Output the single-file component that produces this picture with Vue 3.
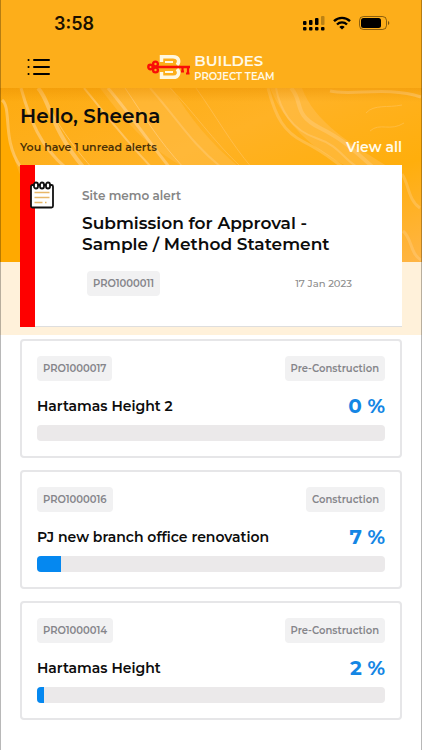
<script setup>
import { ref, computed } from 'vue'

const user = ref('Sheena')

const alerts = ref([
  {
    type: 'Site memo alert',
    title: 'Submission for Approval - Sample / Method Statement',
    code: 'PRO1000011',
    date: '17 Jan 2023'
  }
])

const projects = ref([
  { code: 'PRO1000017', name: 'Hartamas Height 2', stage: 'Pre-Construction', progress: 0 },
  { code: 'PRO1000016', name: 'PJ new branch office renovation', stage: 'Construction', progress: 7 },
  { code: 'PRO1000014', name: 'Hartamas Height', stage: 'Pre-Construction', progress: 2 }
])

const unread = computed(() => alerts.value.length)
</script>

<template>
  <div class="app">
    <header class="header">
      <!-- Status bar -->
      <div class="status-bar">
        <span class="time">3:58</span>
        <div class="status-icons">
          <svg width="22" height="15" viewBox="0 0 22 15">
            <rect x="0" y="5" width="3.500" height="4" rx="1" />
            <rect x="6" y="4" width="3.500" height="5" rx="1" />
            <rect x="12" y="2" width="3.500" height="7" rx="1" />
            <rect x="18" y="0" width="3.500" height="9" rx="1" opacity="0.25" />
            <rect x="0" y="11" width="3.500" height="3.500" rx="1" />
            <rect x="6" y="11" width="3.500" height="3.500" rx="1" />
            <rect x="12" y="11" width="3.500" height="3.500" rx="1" />
            <rect x="18" y="11" width="3.500" height="3.500" rx="1" />
          </svg>
          <svg width="18" height="14" viewBox="0 0 18 14" fill="none" stroke="#000" stroke-width="2.4">
            <path d="M1 5.2C5.5 0.7 12.5 0.7 17 5.2" />
            <path d="M4 8.5C6.8 5.7 11.2 5.7 14 8.5" />
            <path d="M9 13.6L6.3 10.9C7.8 9.5 10.2 9.5 11.7 10.9Z" fill="#000" stroke="none" />
          </svg>
          <svg width="31" height="14" viewBox="0 0 31 14">
            <rect x="0.5" y="0.5" width="27" height="13" rx="4" fill="none" stroke="#000" opacity="0.45" />
            <rect x="2" y="2" width="20" height="10" rx="2.5" />
            <path d="M29 5C30.8 5.6 30.8 8.4 29 9Z" opacity="0.5" />
          </svg>
        </div>
      </div>

      <!-- Navigation bar -->
      <nav class="nav">
        <button class="menu-btn" type="button" aria-label="Menu">
          <svg width="24" height="18" viewBox="0 0 24 18" stroke="#000" stroke-width="2" stroke-linecap="round">
            <path d="M7 2H22M7 9H22M7 16H22" />
            <path d="M1.5 2H1.6M1.5 9H1.6M1.5 16H1.6" />
          </svg>
        </button>
        <div class="brand">
          <svg width="44" height="26" viewBox="0 0 44 26" fill="none">
            <g stroke="#fff7df" stroke-width="3.500">
              <path d="M14.500 8V2.700H26C32 2.700 33 8 30 11" />
              <path d="M30 15C33 18 32 23.300 26 23.300H14.500V18" />
              <path d="M18 8H26M18 18H26" stroke-width="2.200" />
            </g>
            <path d="M9 13H43" stroke="#f80f08" stroke-width="2.600" />
            <path d="M35.500 13V18.500M41 12V20.500M34 17.500H37M39 19.500H42.500" stroke="#f80f08" stroke-width="2.200" />
            <circle cx="3.500" cy="13" r="2.200" stroke="#f80f08" stroke-width="2.400" />
            <circle cx="8.500" cy="10" r="2.400" stroke="#f80f08" stroke-width="2.400" />
            <circle cx="8.500" cy="16" r="2.400" stroke="#f80f08" stroke-width="2.400" />
            <circle cx="7" cy="13" r="1.800" fill="#f80f08" />
          </svg>
          <div class="brand-text">
            <span class="brand-name">BUILDES</span>
            <span class="brand-team">PROJECT TEAM</span>
          </div>
        </div>
      </nav>
    </header>

    <main>
      <!-- Greeting and alerts -->
      <section class="hero">
        <svg class="hero-art" viewBox="0 0 422 174" preserveAspectRatio="none" fill="none" stroke="#ffd9a0">
          <defs>
            <linearGradient id="paint" x1="0" y1="0" x2="1" y2="1">
              <stop offset="0" stop-color="#fdab10" />
              <stop offset="0.4" stop-color="#ffb225" />
              <stop offset="0.7" stop-color="#ffae0c" />
              <stop offset="1" stop-color="#ffb545" />
            </linearGradient>
            <linearGradient id="shade" x1="0" y1="0" x2="0" y2="1">
              <stop offset="0" stop-color="#e88f00" stop-opacity="0.45" />
              <stop offset="1" stop-color="#e88f00" stop-opacity="0" />
            </linearGradient>
          </defs>
          <rect width="422" height="174" fill="url(#paint)" stroke="none" />
          <path d="M0 8C14 30 6 60 22 90V174H0Z" fill="#ffa900" stroke="none" />
          <path d="M100 0C130 40 150 60 185 80H240C210 55 190 30 172 0Z" fill="#ffbd4c" opacity="0.5" stroke="none" />
          <path d="M270 0C285 35 310 60 350 80H390C350 55 315 35 302 0Z" fill="#ffc15c" opacity="0.45" stroke="none" />
          <g opacity="0.5">
            <path d="M2 12C12 20 2 52 20 78" stroke-width="3" />
            <path d="M21 0C30 32 40 58 66 80" stroke-width="3" />
            <path d="M38 0C50 12 50 40 84 80" stroke-width="4" />
            <path d="M45 10C54 30 66 50 92 80" />
            <path d="M84 0C104 24 120 46 152 80" stroke-width="2" />
            <path d="M108 0C130 26 146 50 170 80" stroke-width="3" />
            <path d="M125 0C144 28 158 52 184 80" />
          </g>
          <g opacity="0.3">
            <path d="M150 0C180 34 190 54 222 80" stroke-width="2" />
            <path d="M170 0C194 24 212 52 242 80" />
            <path d="M196 0C216 28 230 54 252 80" />
            <path d="M268 0C276 30 284 44 304 54S330 70 344 80" stroke-width="3" />
            <path d="M276 0C280 22 292 42 316 50S342 70 356 78" stroke-width="2" />
            <path d="M291 0C304 14 292 26 320 40S356 65 374 80" stroke-width="4" />
            <path d="M366 25C374 16 388 20 402 17M370 43C380 34 390 44 404 35" />
            <path d="M402 86C409 96 408 112 420 120M403 143C412 150 410 166 421 172" stroke-width="3" />
          </g>
          <path d="M330 3C350 8 388 -2 421 9" stroke-width="3" opacity="0.5" />
          <rect width="422" height="14" fill="url(#shade)" stroke="none" />
        </svg>

        <div class="hero-content">
          <h1>Hello, {{ user }}</h1>
          <div class="alert-summary">
            <p>You have {{ unread }} unread alerts</p>
            <a href="#alerts">View all</a>
          </div>

          <article v-for="alert in alerts" :key="alert.code" class="alert-card">
            <svg class="memo-icon" width="24" height="28" viewBox="0 0 24 28" fill="none">
              <rect x="1" y="4" width="22" height="22.500" rx="1.500" fill="#fff" stroke="#111" stroke-width="1.800" />
              <g fill="#fff" stroke="#111" stroke-width="1.800">
                <rect x="4" y="1.500" width="4" height="6" rx="2" />
                <rect x="10" y="1.500" width="4" height="6" rx="2" />
                <rect x="16" y="1.500" width="4" height="6" rx="2" />
              </g>
              <path d="M4.500 11.500H19.500M4.500 16.500H19.500M4.500 21.500H12.500M15 21.500H16.500" stroke="#e8b768" stroke-width="1.600" />
            </svg>
            <p class="alert-type">{{ alert.type }}</p>
            <h2>{{ alert.title }}</h2>
            <div class="alert-meta">
              <span class="chip">{{ alert.code }}</span>
              <time>{{ alert.date }}</time>
            </div>
          </article>
        </div>
      </section>

      <!-- Projects -->
      <section class="projects">
        <article v-for="project in projects" :key="project.code" class="project-card">
          <div class="row">
            <span class="chip">{{ project.code }}</span>
            <span class="chip">{{ project.stage }}</span>
          </div>
          <div class="row project-info">
            <h3>{{ project.name }}</h3>
            <span class="percent">{{ project.progress }} %</span>
          </div>
          <div
            class="bar"
            role="progressbar"
            aria-valuemin="0"
            aria-valuemax="100"
            :aria-valuenow="project.progress"
            :aria-label="project.name"
          >
            <div class="bar-fill" :style="{ width: project.progress + '%' }"></div>
          </div>
        </article>
      </section>
    </main>
  </div>
</template>

<style>
body {
  margin: 0;
  background: #fff;
}
</style>

<style scoped>
.app {
  position: relative;
  min-height: 100vh;
  background: #fff;
  color: #0c0c0c;
  font-family: Montserrat, Inter, "Liberation Sans", sans-serif;
}

/* thin edge on both sides of the screen */
.app::after {
  content: '';
  position: absolute;
  inset: 0;
  border: solid rgba(0, 0, 0, 0.28);
  border-width: 0 1px;
  pointer-events: none;
}

h1,
h2,
h3,
p {
  margin: 0;
}

.header {
  background: #fdae1a;
}

.status-bar {
  display: flex;
  justify-content: space-between;
  align-items: center;
  height: 46px;
  padding: 0 32px 0 54px;
}

.time {
  font-family: Inter, "Liberation Sans", sans-serif;
  font-size: 18px;
  font-weight: 600;
  color: #1a1000;
}

.status-icons {
  display: flex;
  align-items: center;
  gap: 8px;
}

.nav {
  display: grid;
  grid-template-columns: 1fr auto 1fr;
  align-items: center;
  height: 42px;
  padding: 0 25px;
}

.menu-btn {
  display: flex;
  justify-self: start;
  padding: 2px;
  border: none;
  background: none;
  cursor: pointer;
}

.brand {
  display: flex;
  align-items: center;
  gap: 3px;
  color: #fff9e6;
}

.brand-text {
  display: flex;
  flex-direction: column;
  font-weight: 600;
}

.brand-name {
  font-size: 15px;
  line-height: 18px;
}

.brand-team {
  font-size: 10px;
  line-height: 13px;
}

.hero {
  position: relative;
  padding: 14px 20px 8px;
  background: #fff1da;
}

.hero-art {
  position: absolute;
  top: 0;
  left: 0;
  width: 100%;
  height: 174px;
}

.hero-content {
  position: relative;
}

h1 {
  font-size: 20px;
  line-height: 28px;
  font-weight: 600;
}

.alert-summary {
  display: flex;
  justify-content: space-between;
  align-items: center;
  margin: 7px 0 8px;
  line-height: 20px;
}

.alert-summary p {
  font-size: 11px;
  font-weight: 600;
  color: #4a3005;
}

.alert-summary a {
  font-size: 14px;
  font-weight: 600;
  color: #fffbea;
  text-decoration: none;
}

.alert-card {
  position: relative;
  padding: 21px 50px 31px 47px;
  background: #fff;
  border-left: 15px solid #fe0000;
  box-shadow: inset 0 -1px #dedede;
}

.memo-icon {
  position: absolute;
  top: 16px;
  left: -5px;
}

.alert-type {
  font-size: 12px;
  line-height: 20px;
  font-weight: 600;
  color: #858585;
}

h2 {
  margin-top: 7px;
  font-size: 17px;
  line-height: 21px;
  font-weight: 600;
}

.alert-meta {
  display: flex;
  justify-content: space-between;
  align-items: center;
  margin-top: 16px;
  padding-left: 5px;
}

.alert-meta time {
  font-size: 10px;
  font-weight: 500;
  color: #8c8c8c;
}

.chip {
  padding: 0 6px;
  border-radius: 4px;
  background: #f1f1f2;
  color: #85858a;
  font-size: 10px;
  line-height: 25px;
  font-weight: 600;
}

.projects {
  display: flex;
  flex-direction: column;
  gap: 12px;
  padding: 4px 20px 30px;
}

.project-card {
  padding: 15px;
  border: 2px solid #e6e6e8;
  border-radius: 4px;
  background: #fff;
}

.row {
  display: flex;
  justify-content: space-between;
  align-items: center;
}

.project-info {
  margin: 13px 0 7px;
  line-height: 24px;
}

h3 {
  font-size: 14px;
  font-weight: 600;
}

.percent {
  font-size: 20px;
  font-weight: 700;
  color: #1486e4;
}

.bar {
  height: 16px;
  border-radius: 4px;
  background: #ebe9ea;
  overflow: hidden;
}

.bar-fill {
  height: 100%;
  background: #0588f0;
}
</style>
